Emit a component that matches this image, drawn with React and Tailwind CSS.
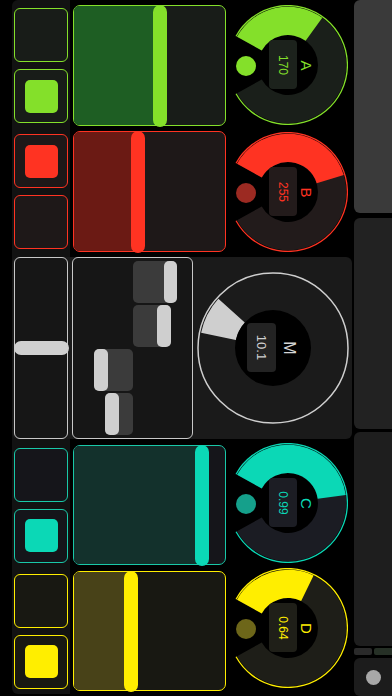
import React from "react";

const rad = (d) => (d * Math.PI) / 180;
const pt = (cx, cy, r, d) => [cx + r * Math.cos(rad(d)), cy + r * Math.sin(rad(d))];

function ring(cx, cy, r1, r2, a0, a1) {
  const large = a1 - a0 > 180 ? 1 : 0;
  const [x0, y0] = pt(cx, cy, r2, a0);
  const [x1, y1] = pt(cx, cy, r2, a1);
  const [x2, y2] = pt(cx, cy, r1, a1);
  const [x3, y3] = pt(cx, cy, r1, a0);
  return `M${x0} ${y0} A${r2} ${r2} 0 ${large} 1 ${x1} ${y1} L${x2} ${y2} A${r1} ${r1} 0 ${large} 0 ${x3} ${y3} Z`;
}

function arc(cx, cy, r, a0, a1) {
  const large = a1 - a0 > 180 ? 1 : 0;
  const [x0, y0] = pt(cx, cy, r, a0);
  const [x1, y1] = pt(cx, cy, r, a1);
  return `M${x0} ${y0} A${r} ${r} 0 ${large} 1 ${x1} ${y1}`;
}

function Knob({ end, color, ringColor, dot, boxClass, textClass, value, letter, className }) {
  return (
    <div className={`relative w-[120px] h-[120px] shrink-0 self-start ${className}`}>
      <svg width="120" height="120" viewBox="0 0 120 120" className="absolute inset-0">
        <path d={ring(60, 60, 30, 58.3, 209, 511)} fill={ringColor} />
        <path d={ring(60, 60, 30, 58.3, 209, end)} fill={color} />
        <path d={arc(60, 60, 59.4, 209, 511)} fill="none" stroke={color} strokeWidth="1.3" />
        <circle cx="18" cy="61" r="10" fill={dot} />
      </svg>
      <div className={`absolute left-[41px] top-[35px] w-[28px] h-[49px] rounded-[4px] flex items-center justify-center ${boxClass}`}>
        <span className={`block rotate-90 whitespace-nowrap text-[12px] leading-none ${textClass}`}>{value}</span>
      </div>
      <div className="absolute left-[70px] top-[50px] w-[16px] h-[20px] flex items-center justify-center">
        <span className={`block rotate-90 text-[15px] leading-none ${textClass}`}>{letter}</span>
      </div>
    </div>
  );
}

function KnobM() {
  return (
    <div className="relative w-[152px] h-[152px] shrink-0">
      <svg width="152" height="152" viewBox="0 0 152 152" className="absolute inset-0">
        <circle cx="76" cy="76" r="75" fill="#1b1b1b" stroke="#cfcfcf" strokeWidth="1.5" />
        <path d={ring(76, 76, 38, 73.5, 192, 222)} fill="#cfcfcf" />
        <circle cx="76" cy="76" r="38" fill="#000" />
      </svg>
      <div className="absolute left-[50px] top-[51px] w-[29px] h-[49px] rounded-[4px] bg-[#232323] flex items-center justify-center">
        <span className="block rotate-90 whitespace-nowrap text-[13px] leading-none text-[#cfcfcf]">10.1</span>
      </div>
      <div className="absolute left-[83px] top-[66px] w-[17px] h-[20px] flex items-center justify-center">
        <span className="block rotate-90 text-[16px] leading-none text-[#d6d6d6]">M</span>
      </div>
    </div>
  );
}

function Btn({ cls, inner }) {
  return (
    <div className={`w-[54px] h-[54px] rounded-[6px] border-[1.5px] flex items-center justify-center ${cls}`}>
      {inner ? <div className={`w-[33px] h-[33px] rounded-[5px] ${inner}`} /> : null}
    </div>
  );
}

function Bar({ side, block, handle }) {
  return (
    <div className="flex h-[42px]">
      <div className="flex-1 flex justify-end">
        {side === "left" ? (
          <div className={`flex rounded-[5px] bg-[#3b3b3b] ${block}`}>
            <div className={`rounded-[5px] bg-[#cfcfcf] ${handle}`} />
          </div>
        ) : null}
      </div>
      <div className="flex-1 flex justify-start">
        {side === "right" ? (
          <div className={`flex justify-end rounded-[5px] bg-[#3b3b3b] ${block}`}>
            <div className={`rounded-[5px] bg-[#cfcfcf] ${handle}`} />
          </div>
        ) : null}
      </div>
    </div>
  );
}

export default function App() {
  return (
    <div className="flex w-[392px] h-[696px] bg-black overflow-hidden font-['Liberation_Sans',Arial,sans-serif]">
      <div className="ml-[12px] w-[340px] h-[694px] flex flex-col pt-[5px] rounded-[6px] bg-[linear-gradient(to_right,#121212_58px,#000_58px)]">
        {/* Row A - green */}
        <div className="flex h-[121px] shrink-0">
          <div className="w-[58px] flex flex-col justify-center gap-[7px] px-[2px]">
            <Btn cls="border-[#84e02a] bg-[#181c18]" />
            <Btn cls="border-[#84e02a] bg-[#181c18]" inner="bg-[#84e02a]" />
          </div>
          <div className="ml-[3px] w-[153px] flex rounded-[7px] border-[1.5px] border-[#84e02a] bg-[#181c18]">
            <div className="w-[86px] rounded-l-[5px] bg-[#1e5e23]" />
            <div className="w-[14px] -ml-[7px] -my-[1.5px] rounded-full bg-[#84e02a]" />
          </div>
          <Knob className="ml-[2px] mt-0" end={306} color="#84e02a" ringColor="#1a1f1a" dot="#84e02a" boxClass="bg-[#1c221c]" textClass="text-[#84e02a]" value="170" letter="A" />
        </div>

        {/* Row B - red */}
        <div className="flex h-[121px] shrink-0 mt-[5px]">
          <div className="w-[58px] flex flex-col justify-center gap-[7px] px-[2px]">
            <Btn cls="border-[#ff3322] bg-[#1e1818]" inner="bg-[#ff3322]" />
            <Btn cls="border-[#ff3322] bg-[#1e1818]" />
          </div>
          <div className="ml-[3px] w-[153px] flex rounded-[7px] border-[1.5px] border-[#ff3322] bg-[#1e1818]">
            <div className="w-[64px] rounded-l-[5px] bg-[#6b1a14]" />
            <div className="w-[14px] -ml-[7px] -my-[1.5px] rounded-full bg-[#ff3322]" />
          </div>
          <Knob className="ml-[2px] mt-[1px]" end={343} color="#ff3322" ringColor="#221b1b" dot="#9c2a22" boxClass="bg-[#231b1b]" textClass="text-[#ff3322]" value="255" letter="B" />
        </div>

        {/* Row M - gray */}
        <div className="flex h-[182px] shrink-0 mt-[5px] rounded-[6px] bg-[#1a1a1a]">
          <div className="ml-[2px] w-[54px] flex flex-col pt-[82.5px] rounded-[6px] border-[1.5px] border-[#c8c8c8] bg-[#161616]">
            <div className="h-[14px] -mx-[1.5px] rounded-full bg-[#d0d0d0]" />
          </div>
          <div className="ml-[4px] w-[121px] flex flex-col gap-[2px] p-[2.5px] rounded-[6px] border-[1.5px] border-[#c8c8c8] bg-[#161616]">
            <Bar side="right" block="w-[44px]" handle="w-[13px]" />
            <Bar side="right" block="w-[38px]" handle="w-[14px]" />
            <Bar side="left" block="w-[39px]" handle="w-[14px]" />
            <Bar side="left" block="w-[28px]" handle="w-[14px]" />
          </div>
          <div className="flex-1 flex items-center justify-center pl-[1px]">
            <KnobM />
          </div>
        </div>

        {/* Row C - teal */}
        <div className="flex h-[120px] shrink-0 mt-[6px]">
          <div className="w-[58px] flex flex-col justify-center gap-[7px] px-[2px]">
            <Btn cls="border-[#19c8a8] bg-[#15151a]" />
            <Btn cls="border-[#19c8a8] bg-[#15151a]" inner="bg-[#0bd8b6]" />
          </div>
          <div className="ml-[3px] w-[153px] flex rounded-[7px] border-[1.5px] border-[#19c8a8] bg-[#15151a]">
            <div className="w-[128px] rounded-l-[5px] bg-[#13312c]" />
            <div className="w-[14px] -ml-[7px] -my-[1.5px] rounded-full bg-[#0bd8b6]" />
          </div>
          <Knob className="ml-[2px] -mt-[2px]" end={352} color="#0bd8b6" ringColor="#1b1c23" dot="#15a08b" boxClass="bg-[#1c1d24]" textClass="text-[#0bd8b6]" value="0.99" letter="C" />
        </div>

        {/* Row D - yellow */}
        <div className="flex h-[120px] shrink-0 mt-[6px]">
          <div className="w-[58px] flex flex-col justify-center gap-[7px] px-[2px]">
            <Btn cls="border-[#ffee00] bg-[#181812]" />
            <Btn cls="border-[#ffee00] bg-[#181812]" inner="bg-[#ffee00]" />
          </div>
          <div className="ml-[3px] w-[153px] flex rounded-[7px] border-[1.5px] border-[#ffee00] bg-[#181812]">
            <div className="w-[57px] rounded-l-[5px] bg-[#484218]" />
            <div className="w-[14px] -ml-[7px] -my-[1.5px] rounded-full bg-[#ffee00]" />
          </div>
          <Knob className="ml-[2px] -mt-[3px]" end={296} color="#ffee00" ringColor="#1e1e18" dot="#6d6619" boxClass="bg-[#1f1f18]" textClass="text-[#ffee00]" value="0.64" letter="D" />
        </div>
      </div>

      {/* Sidebar */}
      <div className="ml-[2px] w-[38px] flex flex-col">
        <div className="h-[213px] shrink-0 rounded-l-[6px] bg-[#3a3a3a]" />
        <div className="h-[211px] shrink-0 mt-[5px] rounded-l-[6px] bg-[#222222]" />
        <div className="h-[214px] shrink-0 mt-[3px] rounded-l-[6px] bg-[#1e1e1e]" />
        <div className="h-[7px] shrink-0 mt-[2px] flex gap-[2px]">
          <div className="w-[18px] rounded-[2px] bg-[#2a2a2a]" />
          <div className="flex-1 rounded-l-[2px] bg-[#263026]" />
        </div>
        <div className="flex-1 mt-[3px] rounded-l-[6px] bg-[#1c1c1c] flex items-center justify-center">
          <div className="w-[15px] h-[15px] rounded-full bg-[#a8a8a8]" />
        </div>
      </div>
    </div>
  );
}
